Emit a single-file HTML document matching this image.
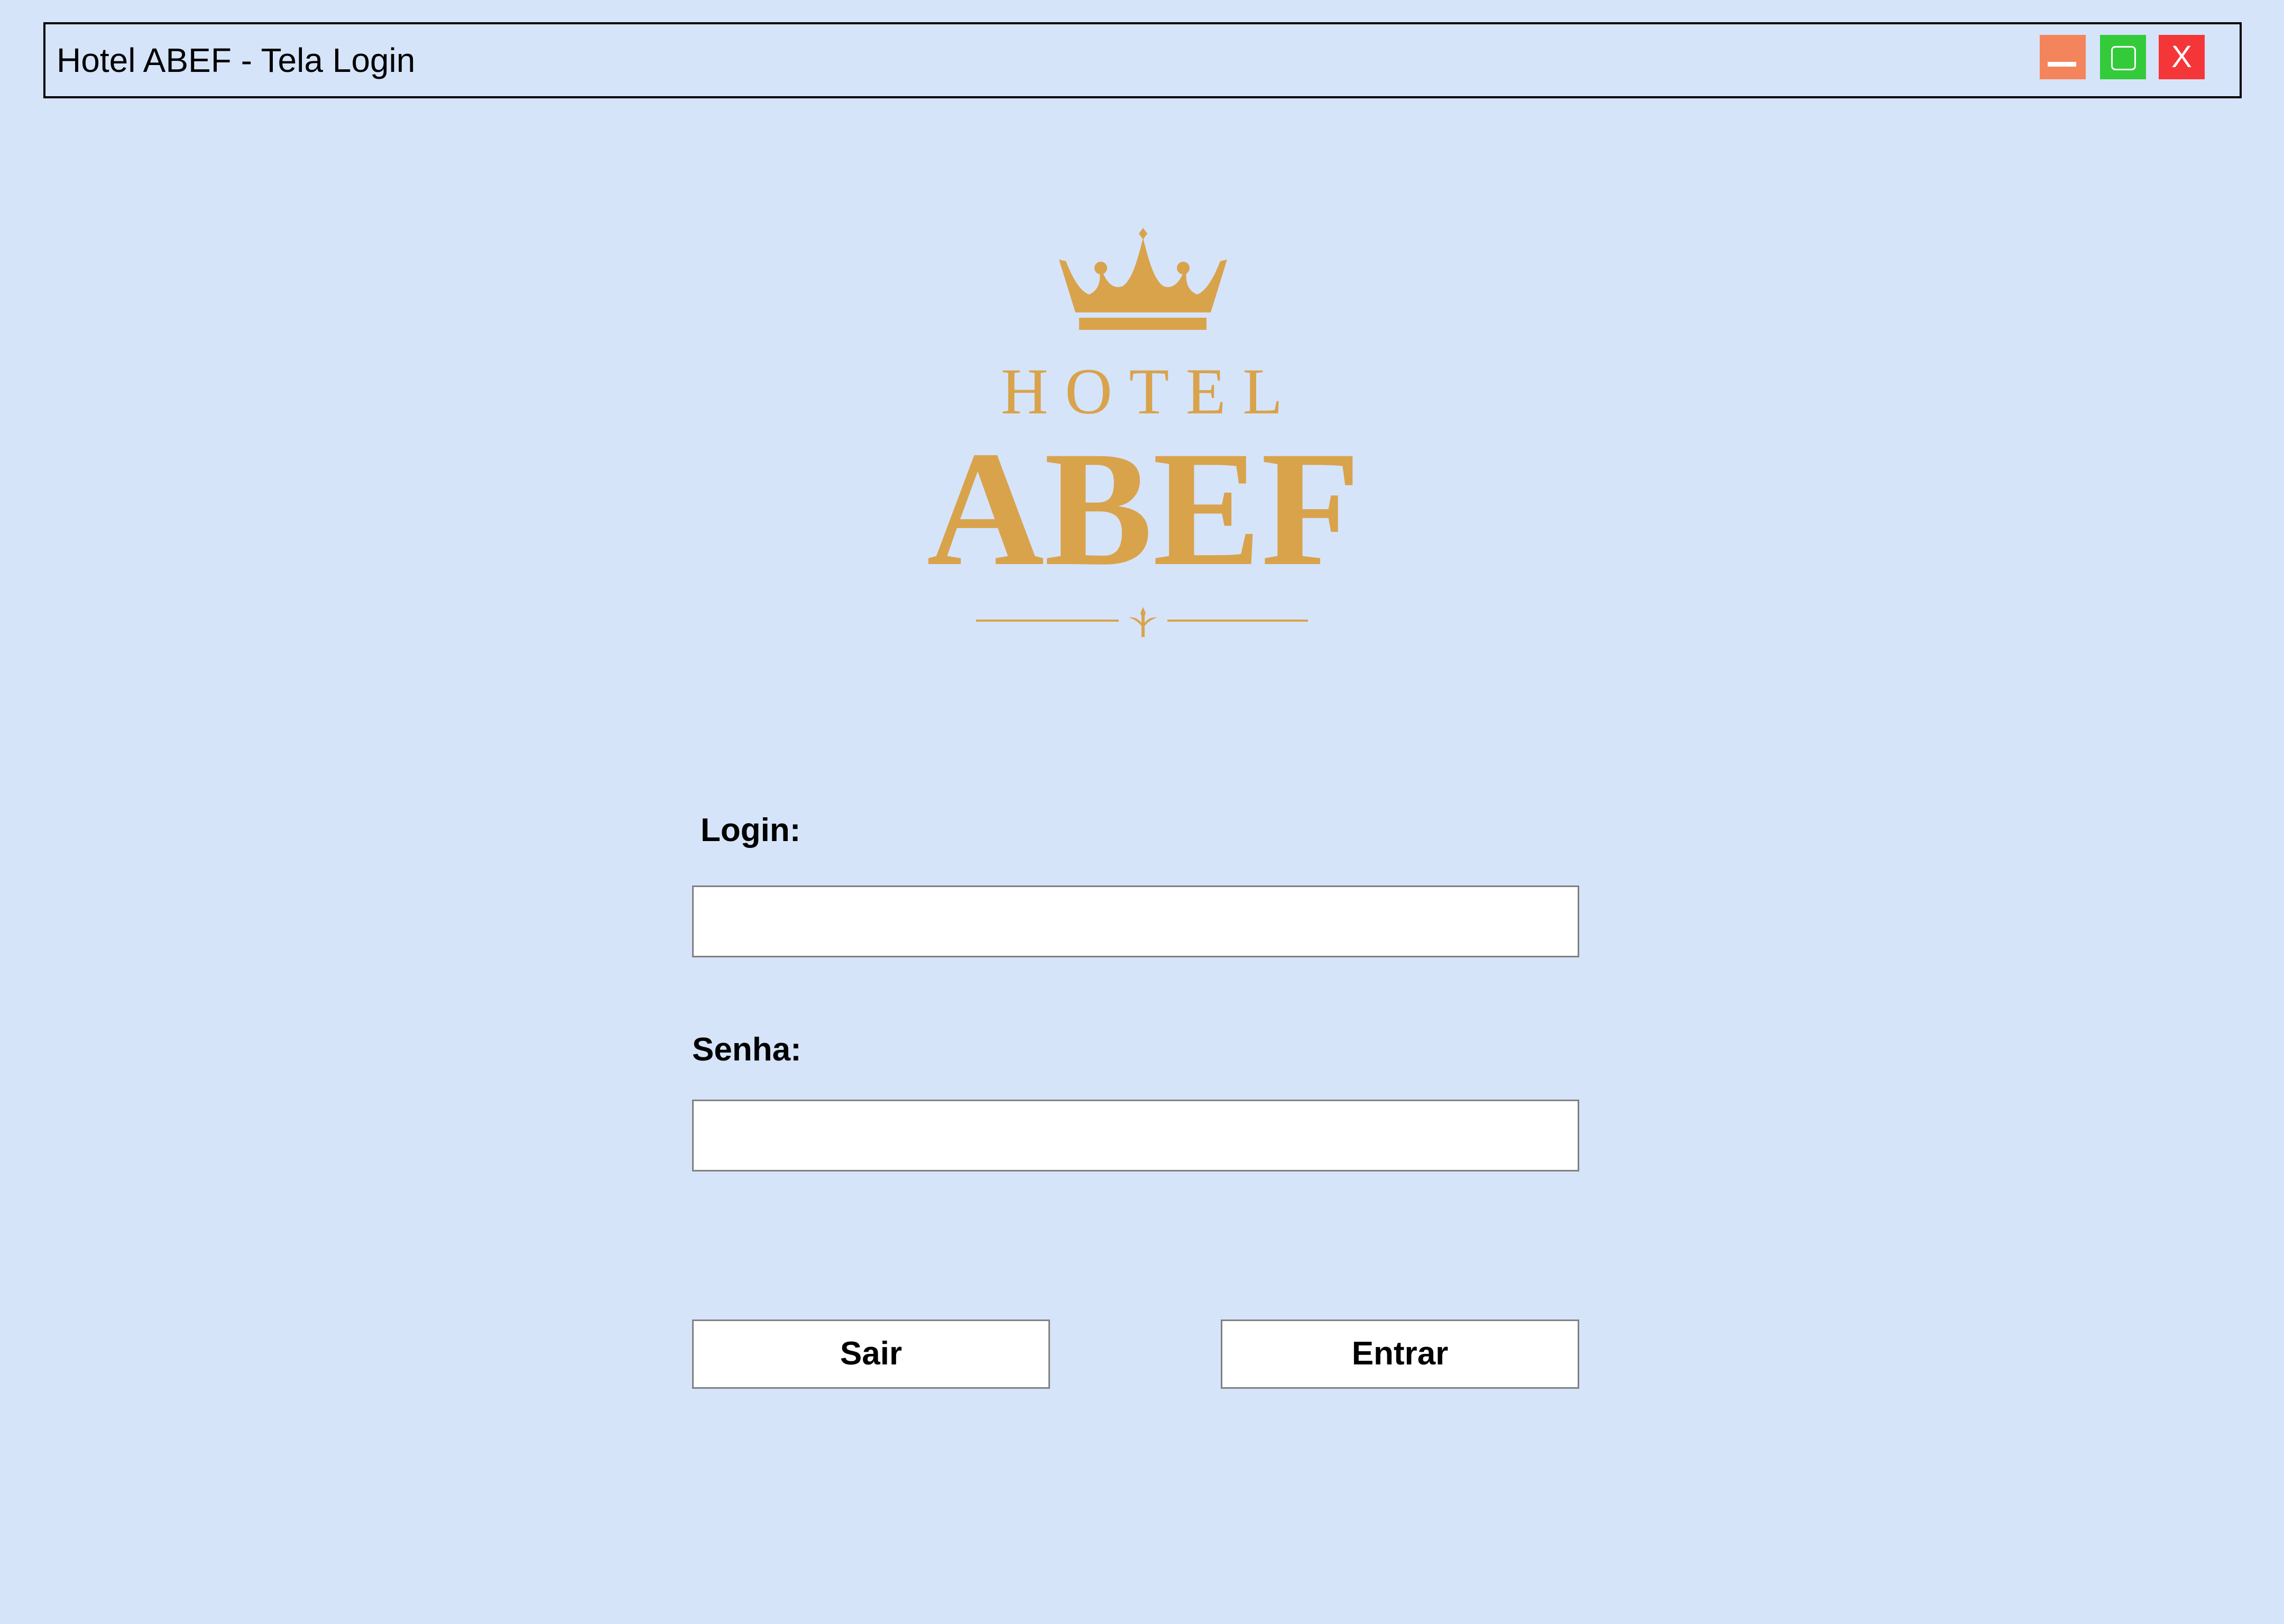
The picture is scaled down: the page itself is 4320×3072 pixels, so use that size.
<!DOCTYPE html>
<html><head><meta charset="utf-8"><style>
html,body{margin:0;padding:0;}
body{width:4320px;height:3072px;background:#d6e4fa;position:relative;overflow:hidden;font-family:"Liberation Sans",sans-serif;}
.abs{position:absolute;}
.bar{left:82px;top:42px;width:4158px;height:144px;border:4px solid #000;box-sizing:border-box;}
.title{left:107px;top:70px;font-size:64px;color:#000;line-height:88px;white-space:nowrap;}
.wb{top:66px;width:87px;height:84px;}
.lbl{font-weight:bold;font-size:62px;color:#000;}
.inp{background:#fff;border:3px solid #808080;box-sizing:border-box;}
.btn{background:#fff;border:3px solid #808080;box-sizing:border-box;font-weight:bold;font-size:62px;text-align:center;line-height:124px;color:#000;}
</style></head><body>
<div class="abs bar"></div>
<div class="abs title">Hotel ABEF - Tela Login</div>
<div class="abs wb" style="left:3858px;background:#f4845c;"><div class="abs" style="left:15px;top:51px;width:54px;height:9px;background:#fff;"></div></div>
<div class="abs wb" style="left:3972px;background:#33cb3a;"><div class="abs" style="left:21px;top:21px;width:41px;height:40px;border:3px solid #fff;border-radius:8px;"></div></div>
<div class="abs wb" style="left:4083px;background:#f43639;color:#fff;font-size:58px;text-align:center;line-height:84px;">X</div>

<svg class="abs" style="left:0;top:0" width="4320" height="1300" viewBox="0 0 4320 1300">
<g fill="#d9a34c">
<path d="M2003,491 L2016,494 C2030,530 2045,552 2060,557 C2076,550 2082,535 2080,516 L2086,516 C2096,540 2110,547 2124,541 C2142,528 2152,490 2162,450 C2172,490 2182,528 2200,541 C2214,547 2228,540 2238,516 L2244,516 C2242,535 2248,550 2264,557 C2279,552 2294,530 2308,494 L2321,491 L2290,591 L2034,591 Z"/>
<circle cx="2082" cy="507" r="12"/><circle cx="2238" cy="507" r="12"/>
<path d="M2162,431 L2170,442 L2162,453 L2154,442 Z"/>
<rect x="2041" y="601" width="241" height="23"/>
<rect x="1846" y="1172" width="270" height="4"/><rect x="2208" y="1172" width="266" height="4"/>
<path d="M2162,1148 L2167,1160 L2162,1172 L2157,1160 Z"/>
<rect x="2159" y="1165" width="6" height="40"/>
<path d="M2135,1168 C2150,1166 2158,1176 2162,1182 C2166,1176 2174,1166 2189,1168 C2175,1172 2168,1180 2162,1188 C2156,1180 2149,1172 2135,1168 Z"/>
</g>
<g fill="#d9a34c" font-family="Liberation Serif, serif">
<text x="1893" y="782" font-size="124" textLength="533" lengthAdjust="spacing">HOTEL</text>
<text x="1753" y="1067" font-size="312" font-weight="bold" textLength="820" lengthAdjust="spacingAndGlyphs">ABEF</text>
</g>
</svg>

<div class="abs lbl" style="left:1325px;top:1535px;">Login:</div>
<div class="abs inp" style="left:1309px;top:1675px;width:1678px;height:136px;"></div>
<div class="abs lbl" style="left:1309px;top:1950px;">Senha:</div>
<div class="abs inp" style="left:1309px;top:2080px;width:1678px;height:136px;"></div>
<div class="abs btn" style="left:1309px;top:2496px;width:677px;height:131px;">Sair</div>
<div class="abs btn" style="left:2309px;top:2496px;width:678px;height:131px;">Entrar</div>
</body></html>
